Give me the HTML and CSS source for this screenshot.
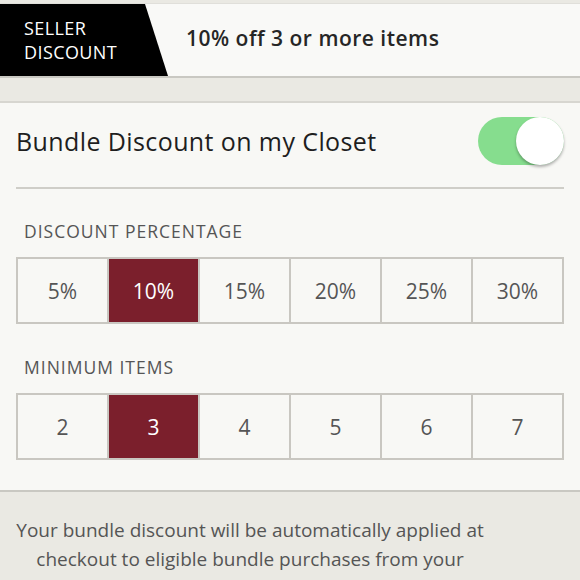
FILE: index.html
```html
<!DOCTYPE html>
<html lang="en">
<head>
    <meta charset="UTF-8">
    <meta name="viewport" content="width=device-width, initial-scale=1.0">
    <title>Bundle Discount</title>
    <link rel="stylesheet" href="styles.css">
</head>
<body>
    <div class="header">
        <div class="badge">SELLER<br>DISCOUNT</div>
        <div class="summary">10% off 3 or more items</div>
    </div>

    <div class="spacer"></div>

    <div class="panel">
        <div class="toggle-row">
            <span class="toggle-label">Bundle Discount on my Closet</span>
            <div class="toggle on"><div class="knob"></div></div>
        </div>

        <div class="section-label">DISCOUNT PERCENTAGE</div>
        <div class="choices">
            <div class="choice">5%</div>
            <div class="choice selected">10%</div>
            <div class="choice">15%</div>
            <div class="choice">20%</div>
            <div class="choice">25%</div>
            <div class="choice">30%</div>
        </div>

        <div class="section-label second">MINIMUM ITEMS</div>
        <div class="choices">
            <div class="choice">2</div>
            <div class="choice selected">3</div>
            <div class="choice">4</div>
            <div class="choice">5</div>
            <div class="choice">6</div>
            <div class="choice">7</div>
        </div>
    </div>

    <div class="footer">
        Your bundle discount will be automatically applied at checkout to eligible bundle purchases from your closet.
    </div>
</body>
</html>
```

FILE: styles.css
```css
body {
    font-family: "Open Sans", Lato, sans-serif;
    margin: 0;
    background-color: #eae9e3;
    color: #222;
    overflow: hidden;
}
.header {
    display: flex;
    align-items: center;
    height: 72px;
    margin-top: 3px;
    background-color: #f9f9f7;
    border-top: 1px solid #e0dfda;
    border-bottom: 2px solid #c9c8c2;
}
.badge {
    align-self: stretch;
    width: 168px;
    box-sizing: border-box;
    padding: 12px 0 0 24px;
    background-color: #000;
    color: #fff;
    font-size: 18px;
    line-height: 24px;
    letter-spacing: 0.4px;
    clip-path: polygon(0 0, 145px 0, 168px 100%, 0 100%);
}
.summary {
    margin-left: 18px;
    padding-bottom: 5px;
    font-size: 21px;
    font-weight: 600;
    letter-spacing: 0.5px;
    color: #262626;
}
.spacer {
    height: 23px;
}
.panel {
    background-color: #f8f8f5;
    border-top: 2px solid #d7d6d0;
    border-bottom: 2px solid #c9c8c2;
    padding: 0 16px 30px;
}
.toggle-row {
    display: flex;
    align-items: center;
    justify-content: space-between;
    padding: 14px 0 22px;
    border-bottom: 2px solid #cfcec8;
}
.toggle-label {
    font-size: 25px;
    letter-spacing: 0.4px;
    color: #1e1e1e;
}
.toggle {
    width: 86px;
    height: 48px;
    border-radius: 24px;
    background-color: #86dd8e;
    display: flex;
    justify-content: flex-end;
}
.knob {
    width: 48px;
    height: 48px;
    border-radius: 50%;
    background-color: #fff;
    box-shadow: 0 2px 3px rgba(0,0,0,0.3);
}
.section-label {
    padding: 30px 8px 14px;
    font-size: 17.5px;
    line-height: 24px;
    letter-spacing: 1px;
    color: #555;
}
.section-label.second {
    padding-top: 31px;
}
.choices {
    display: grid;
    grid-template-columns: repeat(6, 1fr);
    border: 2px solid #c9c7c1;
    border-right: none;
    height: 63px;
}
.choice {
    display: flex;
    align-items: center;
    justify-content: center;
    border-right: 2px solid #c9c7c1;
    font-size: 21px;
    color: #555;
}
.choice.selected {
    background-color: #7b1f2c;
    color: #fff;
}
.footer {
    padding: 24px 96px 22px 16px;
    text-align: center;
    font-size: 19px;
    line-height: 29px;
    color: #555;
}
```
